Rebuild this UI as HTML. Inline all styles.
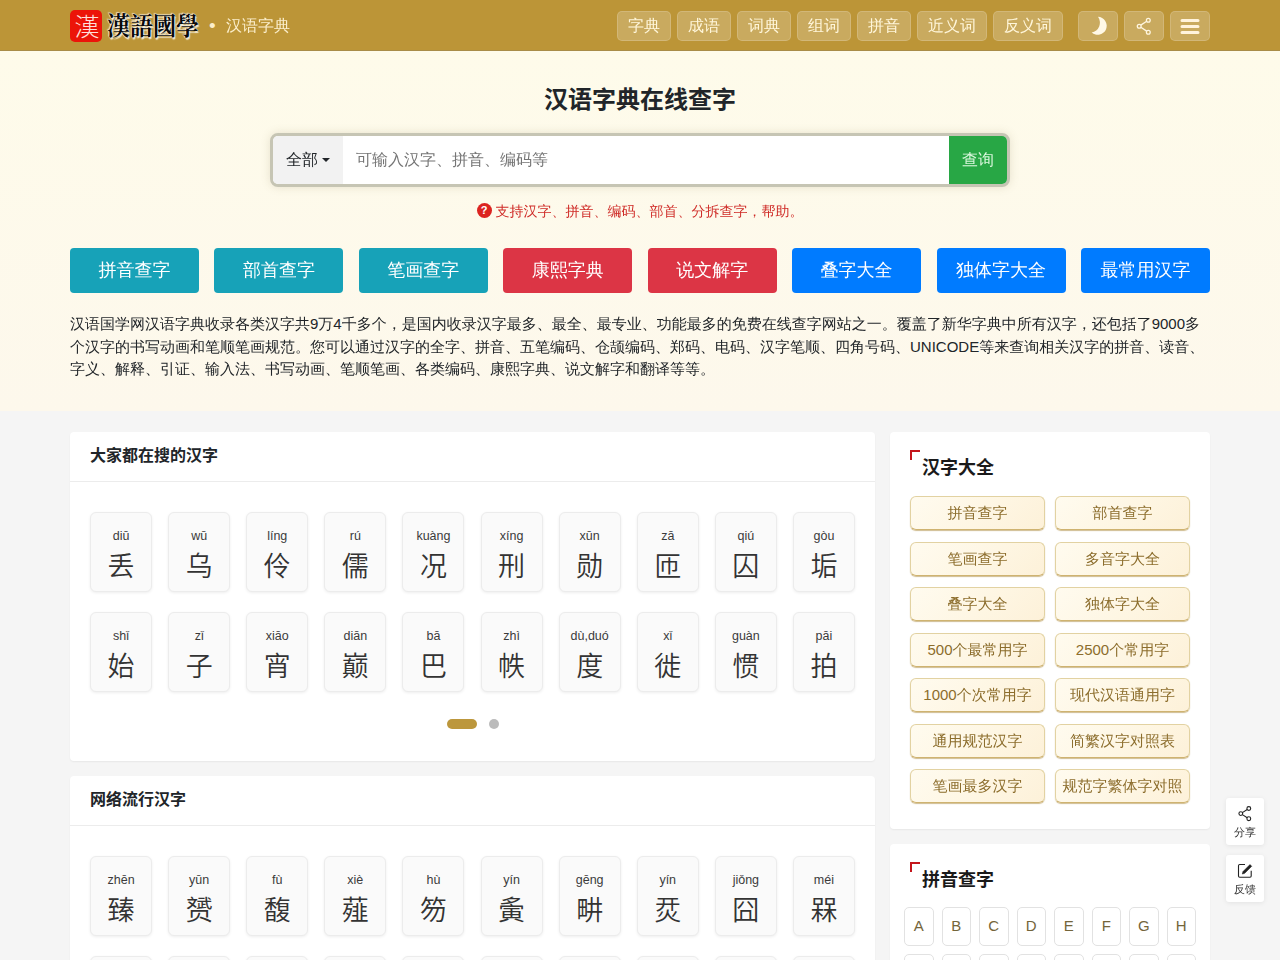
<!DOCTYPE html>
<html lang="zh-CN">
<head>
<meta charset="utf-8">
<title>汉语字典在线查字</title>
<style>
*{box-sizing:border-box;margin:0;padding:0}
html,body{width:1280px;height:960px;overflow:hidden}
body{font-family:"Liberation Sans","WenQuanYi Zen Hei",sans-serif;font-size:15px;color:#212529;background:#f5f5f5;position:relative}
h1,.ch,.st{font-family:"Liberation Sans","Noto Sans CJK SC",sans-serif}
a{text-decoration:none;color:inherit}
.wrap{width:1140px;margin:0 auto;position:relative}

/* header */
.hd{height:51px;background:#bc9537;border-bottom:1px solid #a88c48;position:relative}
.hd .wrap{height:50px}
.logo{position:absolute;left:0;top:10px;width:32px;height:32px;border-radius:5px;background:#ec1409;color:#fff;overflow:hidden}
.logo span{position:absolute;left:1px;width:32px;text-align:center;top:1px;font-size:25px;line-height:32px;font-family:"Liberation Sans","Noto Sans CJK TC",sans-serif;font-weight:300;color:#ffe0dc}
.brand{position:absolute;left:37px;top:11px;transform:scaleY(1.07);transform-origin:50% 50%;font-family:"Liberation Serif","Noto Serif CJK SC",serif;font-weight:700;font-size:23px;line-height:34px;color:#0a0a0a;letter-spacing:0;text-shadow:0 0 1px #fff,0 0 1px #fff,1px 1px 1px rgba(255,255,255,.8),-1px -1px 1px rgba(255,255,255,.6)}
.bdot{position:absolute;left:139px;top:16px;font-size:19px;line-height:20px;color:#fbeecb}
.sub{position:absolute;left:156px;top:15px;font-size:16px;line-height:22px;color:#fbeecb}
.nav{position:absolute;right:0;top:11px;height:30px;display:flex}
.nav a{display:block;height:30px;line-height:28px;border:1px solid rgba(255,255,255,.16);background:rgba(255,255,255,.2);border-radius:5px;color:#fff6da;font-size:16px;padding:0 10px;margin-left:6px;white-space:nowrap}
.nav a.ic{width:40px;padding:0;margin-left:6px;position:relative}
.nav a.first-ic{margin-left:15px}
.nav svg{position:absolute;left:-1px;top:-1px}

/* hero */
.hero{background:linear-gradient(#fefbea,#fdf8ec);height:360px;position:relative}
.hero h1{position:absolute;left:0;right:0;top:33px;text-align:center;font-size:24px;line-height:32px;font-weight:700;color:#212529}
.sbox{position:absolute;left:270px;top:82px;width:740px;height:54px;border:3px solid #c6c5b4;border-radius:8px;background:#fff;overflow:hidden;box-shadow:0 0 10px rgba(120,110,70,.18)}
.sbox .sel{position:absolute;left:0;top:0;width:70px;height:48px;background:#f2f2f2;font-size:16px;line-height:48px;padding-left:13px;color:#212529}
.sbox .sel i{display:inline-block;width:0;height:0;border-left:4px solid transparent;border-right:4px solid transparent;border-top:4px solid #212529;vertical-align:middle;margin-left:4px;position:relative;top:-1px}
.sbox .ph{position:absolute;left:83px;top:0;line-height:48px;font-size:16px;color:#757575}
.sbox .go{position:absolute;right:0;top:0;width:58px;height:48px;background:#28a745;color:#d9f7dc;font-size:16px;line-height:48px;text-align:center}
.hint{position:absolute;left:0;right:0;top:150px;text-align:center;font-size:14px;line-height:20px;color:#cf2b27}
.hint b{display:inline-block;width:15px;height:15px;border-radius:50%;background:#dc2420;color:#fff;font-size:11px;line-height:15.5px;text-align:center;font-weight:700;vertical-align:middle;position:relative;top:-2px;margin-right:4px}
.btns{position:absolute;left:0;top:197px;width:1140px;display:flex;justify-content:space-between}
.btns a{display:block;width:129px;height:45px;border-radius:4px;color:#fff;font-size:18px;line-height:45px;text-align:center}
.c1{background:#17a2b8}.c2{background:#dc3545}.c3{background:#007bff}
.intro{position:absolute;left:0;top:262px;width:1140px;font-size:15px;line-height:22.5px;color:#212529}

/* cards */
.card{position:absolute;background:#fff;border-radius:4px;box-shadow:0 1px 2px rgba(0,0,0,.06)}
.card .ch{height:50px;border-bottom:1px solid #ececec;padding-left:20px;font-size:16px;font-weight:700;line-height:48px;color:#212529}
.tile{position:absolute;width:62.1px;height:80px;border:1px solid #ececec;border-radius:6px;background:#fafafa;box-shadow:0 1px 3px rgba(0,0,0,.07);text-align:center}
.tile .py{position:absolute;left:-10px;right:-10px;top:15px;font-size:12.5px;line-height:16px;color:#3a3a3a;font-family:"Liberation Sans",sans-serif;letter-spacing:0}
.tile .zi{font-family:"Liberation Sans","Noto Sans CJK SC",sans-serif;position:absolute;left:0;right:0;top:34px;font-size:27px;line-height:40px;color:#333;font-weight:350}

.pg1{position:absolute;left:377px;top:287px;width:30px;height:10px;border-radius:5px;background:#bc973c}
.pg2{position:absolute;left:419px;top:287px;width:10px;height:10px;border-radius:5px;background:#bbb}
.bk{position:absolute;left:20px;top:18px;width:10px;height:10px;border-left:2px solid #c4161c;border-top:2px solid #c4161c}
.st{position:absolute;left:32px;top:22.5px;font-size:18px;line-height:26px;font-weight:700;color:#1a1a1a}
.gb{position:absolute;width:135px;height:34px;border:1px solid #e2d2a2;border-bottom-color:#cfb370;border-radius:6px;background:linear-gradient(135deg,#fffbef 0%,#fef6e3 55%,#fdf1d9 100%);color:#8c6d2c;font-size:15px;line-height:32px;text-align:center;white-space:nowrap;box-shadow:0 1px 1px rgba(170,135,55,.55)}
.lt{position:absolute;width:29.5px;height:39px;border:1px solid #e2e2e2;border-radius:5px;background:#fff;color:#74653a;font-size:15px;line-height:36px;text-align:center}
.fl{position:absolute;left:1226px;width:38px;height:47px;background:#fff;border-radius:3px;box-shadow:0 1px 5px rgba(0,0,0,.08)}
.fl svg{position:absolute;left:0;top:0}
.fl span{position:absolute;left:0;right:0;top:26.5px;font-size:11px;line-height:14px;text-align:center;color:#333}
</style>
</head>
<body>
<div class="hd"><div class="wrap">
  <div class="logo"><span>漢</span></div>
  <div class="brand">漢語國學</div>
  <div class="bdot">•</div>
  <div class="sub">汉语字典</div>
  <div class="nav">
    <a>字典</a><a>成语</a><a>词典</a><a>组词</a><a>拼音</a><a>近义词</a><a>反义词</a>
    <a class="ic first-ic"><svg width="40" height="30" viewBox="0 0 40 30"><path d="M20 5.800A9 9 0 1 1 13.700 21.500A10 10 0 0 0 20 5.800z" fill="#fff8e6"/></svg></a>
    <a class="ic"><svg width="40" height="30" viewBox="0 0 40 30" fill="none" stroke="#fff6e0" stroke-width="1.300"><circle cx="24.300" cy="9.200" r="1.900"/><circle cx="15.200" cy="15.200" r="1.900"/><circle cx="24.300" cy="21.200" r="1.900"/><path d="M16.800 14.100l5.900-3.800M16.800 16.300l5.900 3.800"/></svg></a>
    <a class="ic"><svg width="40" height="30" viewBox="0 0 40 30"><path d="M12 9.500h16M12 15.500h16M12 21.500h16" stroke="#fff3dc" stroke-width="3" stroke-linecap="round"/></svg></a>
  </div>
</div></div>

<div class="hero"><div class="wrap" style="height:360px">
  <h1>汉语字典在线查字</h1>
</div>
  <div class="sbox"><div class="sel">全部<i></i></div><div class="ph">可输入汉字、拼音、编码等</div><div class="go">查询</div></div>
<div class="wrap" style="position:absolute;left:70px;top:0">
  <div class="hint"><b>?</b>支持汉字、拼音、编码、部首、分拆查字，帮助。</div>
  <div class="btns"><a class="c1">拼音查字</a><a class="c1">部首查字</a><a class="c1">笔画查字</a><a class="c2">康熙字典</a><a class="c2">说文解字</a><a class="c3">叠字大全</a><a class="c3">独体字大全</a><a class="c3">最常用汉字</a></div>
  <div class="intro">汉语国学网汉语字典收录各类汉字共9万4千多个，是国内收录汉字最多、最全、最专业、功能最多的免费在线查字网站之一。覆盖了新华字典中所有汉字，还包括了9000多个汉字的书写动画和笔顺笔画规范。您可以通过汉字的全字、拼音、五笔编码、仓颉编码、郑码、电码、汉字笔顺、四角号码、UNICODE等来查询相关汉字的拼音、读音、字义、解释、引证、输入法、书写动画、笔顺笔画、各类编码、康熙字典、说文解字和翻译等等。</div>
</div></div>

<div class="card" style="left:70px;top:432px;width:805px;height:329px"><div class="ch">大家都在搜的汉字</div>
<a class="tile" style="left:20.0px;top:80px"><span class="py">diū</span><span class="zi">丢</span></a>
<a class="tile" style="left:98.1px;top:80px"><span class="py">wū</span><span class="zi">乌</span></a>
<a class="tile" style="left:176.2px;top:80px"><span class="py">líng</span><span class="zi">伶</span></a>
<a class="tile" style="left:254.3px;top:80px"><span class="py">rú</span><span class="zi">儒</span></a>
<a class="tile" style="left:332.4px;top:80px"><span class="py">kuàng</span><span class="zi">况</span></a>
<a class="tile" style="left:410.5px;top:80px"><span class="py">xíng</span><span class="zi">刑</span></a>
<a class="tile" style="left:488.6px;top:80px"><span class="py">xūn</span><span class="zi">勋</span></a>
<a class="tile" style="left:566.7px;top:80px"><span class="py">zā</span><span class="zi">匝</span></a>
<a class="tile" style="left:644.8px;top:80px"><span class="py">qiú</span><span class="zi">囚</span></a>
<a class="tile" style="left:722.9px;top:80px"><span class="py">gòu</span><span class="zi">垢</span></a>
<a class="tile" style="left:20.0px;top:180px"><span class="py">shǐ</span><span class="zi">始</span></a>
<a class="tile" style="left:98.1px;top:180px"><span class="py">zǐ</span><span class="zi">子</span></a>
<a class="tile" style="left:176.2px;top:180px"><span class="py">xiāo</span><span class="zi">宵</span></a>
<a class="tile" style="left:254.3px;top:180px"><span class="py">diān</span><span class="zi">巅</span></a>
<a class="tile" style="left:332.4px;top:180px"><span class="py">bā</span><span class="zi">巴</span></a>
<a class="tile" style="left:410.5px;top:180px"><span class="py">zhì</span><span class="zi">帙</span></a>
<a class="tile" style="left:488.6px;top:180px"><span class="py">dù,duó</span><span class="zi">度</span></a>
<a class="tile" style="left:566.7px;top:180px"><span class="py">xǐ</span><span class="zi">徙</span></a>
<a class="tile" style="left:644.8px;top:180px"><span class="py">guàn</span><span class="zi">惯</span></a>
<a class="tile" style="left:722.9px;top:180px"><span class="py">pāi</span><span class="zi">拍</span></a>
<i class="pg1"></i><i class="pg2"></i></div>
<div class="card" style="left:70px;top:776px;width:805px;height:300px"><div class="ch">网络流行汉字</div>
<a class="tile" style="left:20.0px;top:80px"><span class="py">zhēn</span><span class="zi">臻</span></a>
<a class="tile" style="left:98.1px;top:80px"><span class="py">yūn</span><span class="zi">赟</span></a>
<a class="tile" style="left:176.2px;top:80px"><span class="py">fù</span><span class="zi">馥</span></a>
<a class="tile" style="left:254.3px;top:80px"><span class="py">xiè</span><span class="zi">薤</span></a>
<a class="tile" style="left:332.4px;top:80px"><span class="py">hù</span><span class="zi">笏</span></a>
<a class="tile" style="left:410.5px;top:80px"><span class="py">yín</span><span class="zi">夤</span></a>
<a class="tile" style="left:488.6px;top:80px"><span class="py">gēng</span><span class="zi">畊</span></a>
<a class="tile" style="left:566.7px;top:80px"><span class="py">yín</span><span class="zi">烎</span></a>
<a class="tile" style="left:644.8px;top:80px"><span class="py">jiǒng</span><span class="zi">囧</span></a>
<a class="tile" style="left:722.9px;top:80px"><span class="py">méi</span><span class="zi">槑</span></a>
<a class="tile" style="left:20.0px;top:180px"><span class="py"></span><span class="zi"></span></a>
<a class="tile" style="left:98.1px;top:180px"><span class="py"></span><span class="zi"></span></a>
<a class="tile" style="left:176.2px;top:180px"><span class="py"></span><span class="zi"></span></a>
<a class="tile" style="left:254.3px;top:180px"><span class="py"></span><span class="zi"></span></a>
<a class="tile" style="left:332.4px;top:180px"><span class="py"></span><span class="zi"></span></a>
<a class="tile" style="left:410.5px;top:180px"><span class="py"></span><span class="zi"></span></a>
<a class="tile" style="left:488.6px;top:180px"><span class="py"></span><span class="zi"></span></a>
<a class="tile" style="left:566.7px;top:180px"><span class="py"></span><span class="zi"></span></a>
<a class="tile" style="left:644.8px;top:180px"><span class="py"></span><span class="zi"></span></a>
<a class="tile" style="left:722.9px;top:180px"><span class="py"></span><span class="zi"></span></a>
</div>
<div class="card" style="left:890px;top:432px;width:320px;height:397px"><i class="bk"></i><div class="st">汉字大全</div>
<a class="gb" style="left:20px;top:64.0px">拼音查字</a>
<a class="gb" style="left:165px;top:64.0px">部首查字</a>
<a class="gb" style="left:20px;top:109.5px">笔画查字</a>
<a class="gb" style="left:165px;top:109.5px">多音字大全</a>
<a class="gb" style="left:20px;top:155.0px">叠字大全</a>
<a class="gb" style="left:165px;top:155.0px">独体字大全</a>
<a class="gb" style="left:20px;top:200.5px">500个最常用字</a>
<a class="gb" style="left:165px;top:200.5px">2500个常用字</a>
<a class="gb" style="left:20px;top:246.0px">1000个次常用字</a>
<a class="gb" style="left:165px;top:246.0px">现代汉语通用字</a>
<a class="gb" style="left:20px;top:291.5px">通用规范汉字</a>
<a class="gb" style="left:165px;top:291.5px">简繁汉字对照表</a>
<a class="gb" style="left:20px;top:337.0px">笔画最多汉字</a>
<a class="gb" style="left:165px;top:337.0px">规范字繁体字对照</a>
</div>
<div class="card" style="left:890px;top:844px;width:320px;height:300px"><i class="bk"></i><div class="st">拼音查字</div>
<a class="lt" style="left:14.0px;top:63px">A</a>
<a class="lt" style="left:51.5px;top:63px">B</a>
<a class="lt" style="left:89.0px;top:63px">C</a>
<a class="lt" style="left:126.5px;top:63px">D</a>
<a class="lt" style="left:164.0px;top:63px">E</a>
<a class="lt" style="left:201.5px;top:63px">F</a>
<a class="lt" style="left:239.0px;top:63px">G</a>
<a class="lt" style="left:276.5px;top:63px">H</a>
<a class="lt" style="left:14.0px;top:110px"></a>
<a class="lt" style="left:51.5px;top:110px"></a>
<a class="lt" style="left:89.0px;top:110px"></a>
<a class="lt" style="left:126.5px;top:110px"></a>
<a class="lt" style="left:164.0px;top:110px"></a>
<a class="lt" style="left:201.5px;top:110px"></a>
<a class="lt" style="left:239.0px;top:110px"></a>
<a class="lt" style="left:276.5px;top:110px"></a>
</div>
<div class="fl" style="top:798px"><svg width="38" height="47" viewBox="0 0 38 47" fill="none" stroke="#222" stroke-width="1.1"><circle cx="22.8" cy="10.5" r="1.9"/><circle cx="14.8" cy="15.6" r="1.9"/><circle cx="22.8" cy="20.7" r="1.9"/><path d="M16.4 14.6l4.8-3.100M16.4 16.600l4.800 3.100"/></svg><span>分享</span></div>
<div class="fl" style="top:855px"><svg width="38" height="47" viewBox="0 0 38 47" fill="none" stroke="#222" stroke-width="1.100"><path d="M19 9.500h-5.300a1.200 1.200 0 0 0-1.200 1.200v10.300a1.200 1.200 0 0 0 1.200 1.200h10.300a1.200 1.200 0 0 0 1.200-1.200v-5.300"/><path d="M24 9.600l1.700 1.700-7 7-2.400.7.700-2.400z" fill="#222" stroke-width=".6"/></svg><span>反馈</span></div>
</body>
</html>
